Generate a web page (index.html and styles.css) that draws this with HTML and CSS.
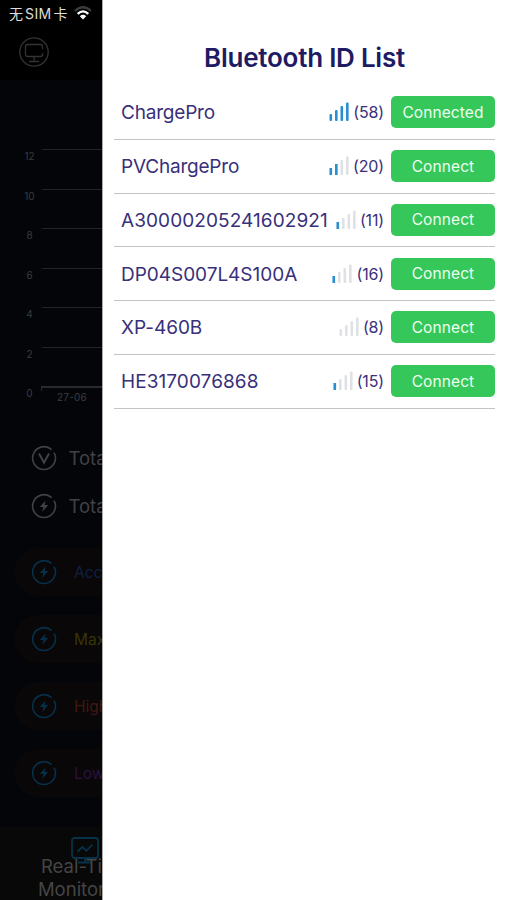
FILE: index.html
```html
<!DOCTYPE html>
<html lang="en">
<head>
<meta charset="utf-8">
<title>Bluetooth ID List</title>
<link rel="stylesheet" href="styles.css">
</head>
<body>
<svg class="defs" width="0" height="0">
  <symbol id="bolt" viewBox="0 0 26 26"><path d="M20.6 4.6A11.4 11.4 0 1 0 23 7.6" fill="none" stroke="currentColor" stroke-width="1.6"/><path d="M14.6 7.5 8.8 14h3.6l-1.2 5 6-7h-3.6z" fill="currentColor"/></symbol>
  <symbol id="volt" viewBox="0 0 26 26"><path d="M20.6 4.6A11.4 11.4 0 1 0 23 7.6" fill="none" stroke="currentColor" stroke-width="1.6"/><path d="m8 8.5 5 9.2 5-9.2" fill="none" stroke="currentColor" stroke-width="2"/></symbol>
  <symbol id="bars" viewBox="0 0 20 19"><rect x="0.5" y="12" width="2.6" height="7" rx="1"/><rect x="6" y="8" width="2.6" height="11" rx="1"/><rect x="11.5" y="4" width="2.6" height="15" rx="1"/><rect x="17" y="0.5" width="2.6" height="18.5" rx="1"/></symbol>
</svg>
<div class="screen">
  <aside class="behind">
    <div class="status"><span>无<b>SIM</b>卡</span>
      <svg width="18" height="14" viewBox="0 0 18 14" fill="none" stroke-width="2.3"><path d="M1 5Q9-2.5 17 5" stroke="#3c3c3c"/><path d="M3.7 7.8Q9 3 14.3 7.8" stroke="#fff"/><path d="M5.8 10.2Q9 7.5 12.2 10.2L9 13.4z" fill="#fff"/></svg>
    </div>
    <div class="top"><svg width="30" height="30" viewBox="0 0 30 30" fill="none" stroke="#333" stroke-width="1.3"><circle cx="15" cy="15" r="14.2"/><path d="M23.5 12V9.5a2 2 0 0 0-2-2h-13a2 2 0 0 0-2 2v8a2 2 0 0 0 2 2h13a2 2 0 0 0 2-2V16M15 19.5V24M10 24.5h10"/></svg></div>
    <div class="chart">
      <div class="tick"><span>12</span><i></i></div>
      <div class="tick"><span>10</span><i></i></div>
      <div class="tick"><span>8</span><i></i></div>
      <div class="tick"><span>6</span><i></i></div>
      <div class="tick"><span>4</span><i></i></div>
      <div class="tick"><span>2</span><i></i></div>
      <div class="tick base"><span>0</span><i>27-06</i></div>
    </div>
    <div class="total"><svg><use href="#volt"/></svg>Total</div>
    <div class="total"><svg><use href="#bolt"/></svg>Total</div>
    <div class="cards">
      <div class="card acc"><svg><use href="#bolt"/></svg>Acc</div>
      <div class="card max"><svg><use href="#bolt"/></svg>Max</div>
      <div class="card high"><svg><use href="#bolt"/></svg>High</div>
      <div class="card low"><svg><use href="#bolt"/></svg>Low</div>
    </div>
    <div class="tab">
      <svg width="28" height="27" viewBox="0 0 28 27" fill="none" stroke="#07324a" stroke-width="1.8"><rect x="1" y="1" width="26" height="20" rx="2.5"/><path d="m6.5 14.5 5-4.5 4 3.8 6-6.3M14 21v4M7 25.5h14"/></svg>
      <div class="tabtext">Real-Time<br>Monitoring</div>
    </div>
  </aside>
  <main class="drawer">
    <h1>Bluetooth ID List</h1>
    <ul>
      <li><span class="name word">ChargePro</span><svg class="sig s4"><use href="#bars"/></svg><span class="rssi">(58)</span><button>Connected</button></li>
      <li><span class="name word">PVChargePro</span><svg class="sig" viewBox="0 0 20 19"><use href="#bars"/><path class="on" d="M.5 12h2.6v7H.5zM6 8h2.6v11H6z"/></svg><span class="rssi">(20)</span><button>Connect</button></li>
      <li><span class="name long">A30000205241602921</span><svg class="sig" viewBox="0 0 20 19"><use href="#bars"/><path class="on" d="M.5 12h2.6v7H.5z"/></svg><span class="rssi">(11)</span><button>Connect</button></li>
      <li><span class="name">DP04S007L4S100A</span><svg class="sig" viewBox="0 0 20 19"><use href="#bars"/><path class="on" d="M.5 12h2.6v7H.5z"/></svg><span class="rssi">(16)</span><button>Connect</button></li>
      <li><span class="name">XP-460B</span><svg class="sig"><use href="#bars"/></svg><span class="rssi">(8)</span><button>Connect</button></li>
      <li><span class="name long">HE3170076868</span><svg class="sig" viewBox="0 0 20 19"><use href="#bars"/><path class="on" d="M.5 12h2.6v7H.5z"/></svg><span class="rssi">(15)</span><button>Connect</button></li>
    </ul>
  </main>
</div>
</body>
</html>
```
FILE: styles.css
```css
* { box-sizing: border-box; }
body { margin: 0; font-family: Inter, "Noto Sans CJK SC", sans-serif; background: #fff; }
.defs { display: block; }
.screen { display: flex; width: 507px; height: 900px; overflow: hidden; }
.behind { width: 102px; flex: none; overflow: hidden; background: #030509; white-space: nowrap; display: flex; flex-direction: column; }
.behind > * { flex: none; }
.status { height: 28px; padding: 0 0 2px 9px; background: #000; color: #ddd; font-size: 14px; display: flex; align-items: center; gap: 6px; }
.status b { font-weight: 400; margin: 0 2px; letter-spacing: .4px; }
.top { height: 52px; padding: 9px 0 0 19px; background: #000; }
.chart { padding-top: 69px; height: 354px; }
.tick { display: flex; height: 39.5px; color: #3b3c3f; font-size: 10px; }
.tick span { width: 17px; margin-left: 21px; text-align: center; line-height: 14px; }
.tick i { flex: 1; margin-left: 4px; border-top: 1px solid #222326; font-style: normal; }
.base i { border-top: 2px solid #292a2d; border-left: 1px solid #292a2d; height: 4px; padding: 3px 0 0 15px; margin-left: 3px; letter-spacing: .2px; }
.total { height: 48px; display: flex; align-items: center; padding-left: 30.5px; gap: 12px; color: #414245; font-size: 18.5px; }
.total svg, .card svg { width: 26px; height: 26px; flex: none; }
.cards { display: flex; flex-direction: column; gap: 19px; margin: 18px 0 0 14px; }
.card { height: 48px; width: 200px; border-radius: 24px; background: #090707; display: flex; align-items: center; padding-left: 16.5px; gap: 17.5px; font-size: 15.5px; }
.card svg { color: #06304a; }
.acc { color: #102044; }
.max { color: #383509; }
.high { color: #431813; }
.low { color: #2c123f; }
.tab { width: 170px; height: 73px; margin-top: 30px; background: #080808; padding-top: 10px; display: grid; justify-items: center; align-content: start; }
.tab svg, .tabtext { grid-area: 1 / 1; }
.tabtext { padding-top: 18px; text-align: center; color: #454545; font-size: 18.5px; line-height: 23px; }
.drawer { flex: 1; background: #fff; border-left: 1px solid #aaa; padding: 0 12px 0 11px; }
h1 { margin: 0; height: 86px; padding-top: 42px; text-align: center; font-size: 26px; line-height: 32px; font-weight: 600; color: #201a62; letter-spacing: -.25px; }
ul { list-style: none; margin: 0; padding: 0; }
li { height: 53.75px; display: flex; align-items: center; padding-left: 7px; border-bottom: 1px solid #c4c4c8; }
.name { flex: 1; padding-top: 1px; color: #38307a; font-size: 19px; letter-spacing: -.03px; white-space: nowrap; }
.word { letter-spacing: -.2px; }
.long { letter-spacing: .08px; }
.sig { width: 20px; height: 19px; margin: 0 4px 1px 0; fill: #e0e1e4; flex: none; }
.s4, .on { fill: #288fd0; }
.rssi { font-size: 16px; letter-spacing: -.15px; color: #38307a; margin-right: 7px; }
button { width: 104px; height: 32px; padding: 0; border: 0; border-radius: 5px; background: #35c759; color: #edfff1; font: 15.5px Inter, sans-serif; letter-spacing: .1px; }
```
